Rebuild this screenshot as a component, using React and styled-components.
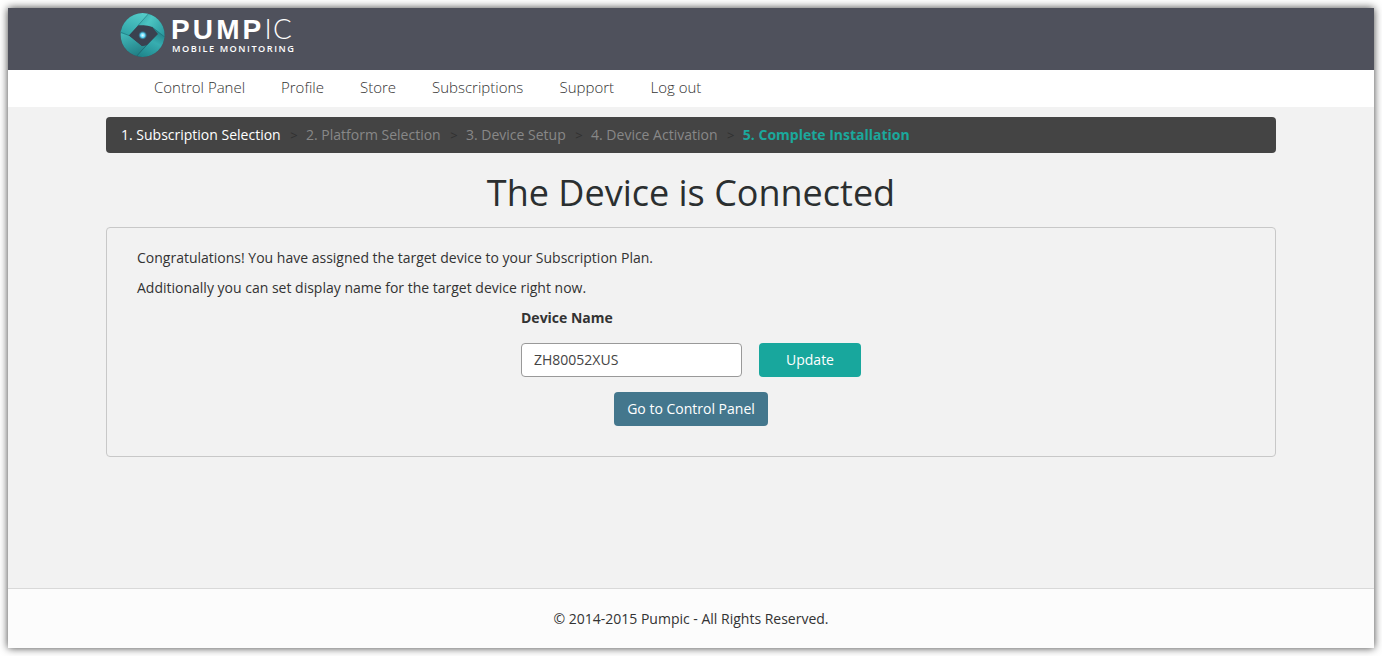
import React, { useState } from "react";
import styled, { createGlobalStyle } from "styled-components";

const GlobalStyle = createGlobalStyle`
  *, *::before, *::after { box-sizing: border-box; }
  body {
    margin: 0;
    background: #fff;
    color: #333;
    font: 14px/20px "Open Sans", "Noto Sans", sans-serif;
  }
`;

const Page = styled.div`
  display: flex;
  flex-direction: column;
  height: 640px;
  margin: 8px;
  background: #f2f2f2;
  box-shadow: 0 0 8px rgba(0, 0, 0, 0.75);
`;

const Header = styled.header`
  height: 62px;
  background: #4f515c;
`;

const Container = styled.div`
  width: 1170px;
  margin: 0 auto;
`;

const LogoSvg = styled.svg`
  display: block;
  margin-left: 14px;
`;

const Nav = styled.nav`
  height: 37px;
  background: #fff;
`;

const NavList = styled(Container)`
  display: flex;
  gap: 36px;
  padding-left: 48px;
`;

const NavLink = styled.a`
  color: #333;
  font-size: 15px;
  font-weight: 300;
  line-height: 35px;
  width: ${(p) => p.$width}px;
  white-space: nowrap;
`;

const Main = styled(Container)`
  flex: 1;
  padding-top: 10px;
`;

const Steps = styled.ol`
  display: flex;
  height: 36px;
  margin: 0;
  padding: 8px 15px;
  list-style: none;
  background: #444;
  border-radius: 4px;
`;

const stepColors = { done: "#fff", idle: "#888", current: "#1ba89c" };

const Step = styled.li`
  color: ${(p) => stepColors[p.$state]};
  font-weight: ${(p) => (p.$state === "current" ? 700 : 400)};
  white-space: pre;

  &:not(:first-child)::before {
    content: ">\\00a0";
    padding: 0 5px 0 9.5px;
    color: #303030;
    font-size: 13px;
    font-weight: 400;
  }
`;

const Title = styled.h1`
  margin: 20px 0 14px;
  color: #2b2f30;
  font-size: 36px;
  font-weight: 400;
  line-height: 40px;
  text-align: center;
`;

const Panel = styled.section`
  height: 230px;
  padding: 20px 30px;
  border: 1px solid #c8c8c8;
  border-radius: 4px;
`;

const Text = styled.p`
  margin: 0 0 10px;
`;

const Form = styled.form`
  display: flex;
  flex-direction: column;
  align-items: center;
  gap: 15px;
`;

const Field = styled.div`
  width: 340px;
`;

const Label = styled.label`
  display: block;
  margin-bottom: 15px;
  font-weight: 700;
`;

const FieldRow = styled.div`
  display: flex;
  justify-content: space-between;
`;

const Input = styled.input`
  width: 221px;
  height: 34px;
  padding: 5px 12px 7px;
  border: 1px solid #999;
  border-radius: 4px;
  background: #fff;
  color: #444;
  font: inherit;
  outline: none;
`;

const Button = styled.button`
  width: ${(p) => p.$width}px;
  height: 34px;
  padding: 0;
  border: 0;
  border-radius: 4px;
  background: ${(p) => p.$color};
  color: #fff;
  font: inherit;
  white-space: nowrap;
`;

const Footer = styled.footer`
  height: 60px;
  padding-top: 20px;
  border-top: 1px solid #d9d9d9;
  background: #fcfcfc;
  text-align: center;
`;

function Logo() {
  return (
    <LogoSvg width="180" height="56" viewBox="0 0 180 56" role="img" aria-label="Pumpic">
      <defs>
        <linearGradient id="bladeTop" x1="0" y1="0" x2="1" y2="0.6">
          <stop offset="0" stopColor="#2a989e" />
          <stop offset="0.45" stopColor="#4cc6c3" />
          <stop offset="1" stopColor="#2b9aa0" />
        </linearGradient>
        <linearGradient id="bladeRight" x1="0.8" y1="0" x2="0.3" y2="1">
          <stop offset="0" stopColor="#1b757d" />
          <stop offset="0.45" stopColor="#37adb0" />
          <stop offset="1" stopColor="#1d838a" />
        </linearGradient>
        <linearGradient id="bladeBottom" x1="0.2" y1="0" x2="0.7" y2="1">
          <stop offset="0" stopColor="#45bdbd" />
          <stop offset="1" stopColor="#187078" />
        </linearGradient>
        <linearGradient id="bladeLeft" x1="0.7" y1="0" x2="0.2" y2="1">
          <stop offset="0" stopColor="#58d0cc" />
          <stop offset="1" stopColor="#2fa3a7" />
        </linearGradient>
        <radialGradient id="pupil">
          <stop offset="0" stopColor="#f2ffff" />
          <stop offset="0.5" stopColor="#5fd8f8" />
          <stop offset="1" stopColor="#1686ad" stopOpacity="0" />
        </radialGradient>
        <clipPath id="round"><circle cx="22.6" cy="27" r="22" /></clipPath>
      </defs>
      <g clipPath="url(#round)">
        <rect width="45" height="50" y="4" fill="#3a414f" />
        <path d="M30 3 L17 17 L32 19 L46 31 L48 3 Z" fill="url(#bladeTop)" />
        <path d="M46 30 L32 19 L37 26 L14 51 L46 51 Z" fill="url(#bladeRight)" />
        <path d="M36 27 L14 51 L0 51 L0 22 L9 27.5 L22 38 L27 37 Z" fill="url(#bladeBottom)" />
        <path d="M0 25 L9 27.5 L18.5 17 L30 4 L0 2 Z" fill="url(#bladeLeft)" />
        <path d="M30 4 L18 17.5 M46 30 L32 19 M14 51 L36 27 M0 24 L9 27.5" fill="none" stroke="#125f68" strokeWidth="0.9" strokeOpacity="0.5" />
        <path d="M9 27.5 L18 18 Q25 16 32 19 L38 26 L27 37 L22 38 Z" fill="#3a414f" />
      </g>
      <circle cx="22.7" cy="27.3" r="4.5" fill="url(#pupil)" />
      <g fill="#fff">
        <text x="51.1" y="31" fontFamily="Liberation Sans, sans-serif" fontSize="28" fontWeight="700" letterSpacing="3.1">PUMP</text>
        <text x="144.5" y="31" fontFamily="Lato, sans-serif" fontSize="27.7" fontWeight="300" letterSpacing="1.4">IC</text>
        <text x="52" y="43.5" fontFamily="Open Sans, sans-serif" fontSize="9.2" fontWeight="600" textLength="121.9">MOBILE MONITORING</text>
      </g>
    </LogoSvg>
  );
}

const links = [
  ["Control Panel", 91],
  ["Profile", 43],
  ["Store", 36],
  ["Subscriptions", 91.5],
  ["Support", 55],
  ["Log out", 51],
];

const steps = [
  ["1. Subscription Selection", "done"],
  ["2. Platform Selection", "idle"],
  ["3. Device Setup", "idle"],
  ["4. Device Activation", "idle"],
  ["5. Complete Installation", "current"],
];

export default function App() {
  const [name, setName] = useState("ZH80052XUS");
  return (
    <>
      <GlobalStyle />
      <Page>
        <Header>
          <Container><Logo /></Container>
        </Header>
        <Nav>
          <NavList>
            {links.map(([label, width]) => (
              <NavLink key={label} $width={width}>{label}</NavLink>
            ))}
          </NavList>
        </Nav>
        <Main>
          <Steps>
            {steps.map(([label, state]) => (
              <Step key={label} $state={state}>{label}</Step>
            ))}
          </Steps>
          <Title>The Device is Connected</Title>
          <Panel>
            <Text>Congratulations! You have assigned the target device to your Subscription Plan.</Text>
            <Text>Additionally you can set display name for the target device right now.</Text>
            <Form onSubmit={(e) => e.preventDefault()}>
              <Field>
                <Label htmlFor="device-name">Device Name</Label>
                <FieldRow>
                  <Input id="device-name" value={name} onChange={(e) => setName(e.target.value)} />
                  <Button $width={102} $color="#18a79d">Update</Button>
                </FieldRow>
              </Field>
              <Button type="button" $width={154} $color="#44778d">Go to Control Panel</Button>
            </Form>
          </Panel>
        </Main>
        <Footer>© 2014-2015 Pumpic - All Rights Reserved.</Footer>
      </Page>
    </>
  );
}
